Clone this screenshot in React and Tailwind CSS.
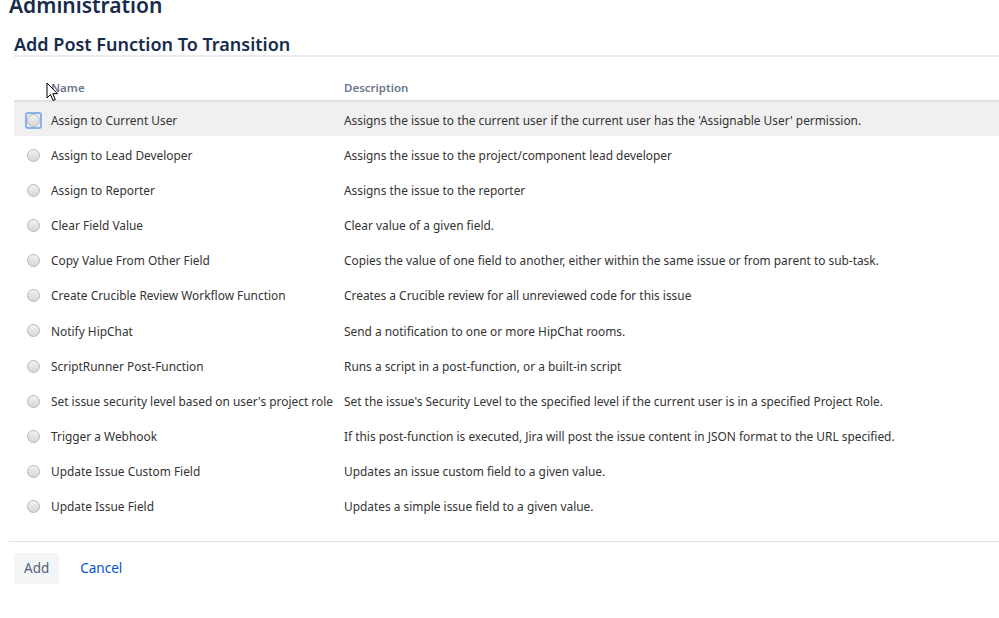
const functions = [
  ['Assign to Current User', "Assigns the issue to the current user if the current user has the 'Assignable User' permission."],
  ['Assign to Lead Developer', 'Assigns the issue to the project/component lead developer'],
  ['Assign to Reporter', 'Assigns the issue to the reporter'],
  ['Clear Field Value', 'Clear value of a given field.'],
  ['Copy Value From Other Field', 'Copies the value of one field to another, either within the same issue or from parent to sub-task.'],
  ['Create Crucible Review Workflow Function', 'Creates a Crucible review for all unreviewed code for this issue'],
  ['Notify HipChat', 'Send a notification to one or more HipChat rooms.'],
  ['ScriptRunner Post-Function', 'Runs a script in a post-function, or a built-in script'],
  ["Set issue security level based on user's project role", "Set the issue's Security Level to the specified level if the current user is in a specified Project Role."],
  ['Trigger a Webhook', 'If this post-function is executed, Jira will post the issue content in JSON format to the URL specified.'],
  ['Update Issue Custom Field', 'Updates an issue custom field to a given value.'],
  ['Update Issue Field', 'Updates a simple issue field to a given value.'],
];

function Radio({ focused }) {
  return (
    <span
      className={
        'inline-flex items-center justify-center w-[17px] h-[17px] rounded-[3px] border-2 ' +
        (focused ? 'border-[#8ab0ea]' : 'border-transparent')
      }
    >
      <span className="block w-[13px] h-[13px] rounded-full border border-[#b8b8b8] bg-gradient-to-b from-[#f2f2f2] to-[#d6d6d6]" />
    </span>
  );
}

function Cursor() {
  return (
    <svg className="absolute left-[46px] top-[82px]" width="13" height="20" viewBox="0 0 13 20">
      <path d="M1 1 L1 16 L4.5 12.5 L7 18.5 L9.3 17.5 L6.8 11.7 L11.5 11.7 Z" fill="#fff" stroke="#000" strokeWidth="1" strokeLinejoin="round" />
    </svg>
  );
}

export default function App() {
  return (
    <div className="relative w-[999px] h-[618px] overflow-hidden bg-white text-[#333] font-['Noto_Sans',sans-serif]">
      <h1 className="ml-[9px] -mt-[8px] text-[21px] leading-[26px] font-semibold text-[#172b4d]">Administration</h1>

      <div className="ml-[14px] mt-[15px]">
        <h2 className="text-[18px] leading-[22px] font-semibold text-[#172b4d] border-b-2 border-[#ebecf0]">
          Add Post Function To Transition
        </h2>

        <table className="mt-[22px] w-full border-collapse text-[11.9px]">
          <thead>
            <tr className="border-b-2 border-[#dfe1e6]">
              <th className="w-[37px]" />
              <th className="w-[293px] text-left font-semibold text-[#6b778c] text-[11.5px] pb-[4px]">Name</th>
              <th className="text-left font-semibold text-[#6b778c] text-[11.5px] pb-[4px]">Description</th>
            </tr>
          </thead>
          <tbody>
            {functions.map(([name, desc], i) => (
              <tr key={name} className={'h-[35.2px] ' + (i === 0 ? 'bg-[#f0f0f0]' : '')}>
                <td className="pl-[11px] pt-[2px] align-middle">
                  <span className="flex">
                    <Radio focused={i === 0} />
                  </span>
                </td>
                <td className="whitespace-nowrap pt-[3px]">{name}</td>
                <td className="whitespace-nowrap pt-[3px]">{desc}</td>
              </tr>
            ))}
          </tbody>
        </table>
      </div>

      <div className="ml-[9px] mt-[17px] border-t border-[#dfe1e6] pt-[11px] pl-[5px] flex items-center gap-[21px] text-[13.5px]">
        <button className="h-[31px] px-[10px] rounded-[3px] bg-[#f4f5f7] text-[#505f79]">Add</button>
        <a className="text-[#0052cc]">Cancel</a>
      </div>

      <Cursor />
    </div>
  );
}
